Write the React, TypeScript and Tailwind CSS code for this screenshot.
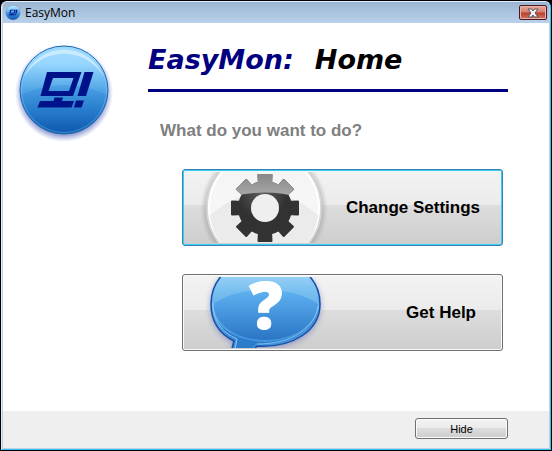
import React from 'react';

function Logo({ id, className }: { id: string; className: string }) {
  return (
    <svg viewBox="0 0 100 100" className={className} aria-hidden="true">
      <defs>
        <linearGradient id={`${id}-disc`} x1="0" y1="0" x2="0" y2="1">
          <stop offset="0" stopColor="#a5dcff" />
          <stop offset="0.2" stopColor="#97d6ff" />
          <stop offset="0.5" stopColor="#52a6e6" />
          <stop offset="0.75" stopColor="#2a7fd0" />
          <stop offset="1" stopColor="#0d56ad" />
        </linearGradient>
        <linearGradient id={`${id}-low`} x1="0" y1="0" x2="0" y2="1">
          <stop offset="0" stopColor="#2f8ada" />
          <stop offset="1" stopColor="#0a52a8" />
        </linearGradient>
        <radialGradient id={`${id}-glow`}>
          <stop offset="0.84" stopColor="#2a3f9a" stopOpacity="0.55" />
          <stop offset="1" stopColor="#5a6ad0" stopOpacity="0" />
        </radialGradient>
        <clipPath id={`${id}-clip`}>
          <circle cx="50" cy="47" r="43" />
        </clipPath>
      </defs>
      <circle cx="50" cy="50" r="49" fill={`url(#${id}-glow)`} />
      <circle cx="50" cy="47" r="44" fill={`url(#${id}-disc)`} stroke="#1d69b8" strokeWidth="1" />
      <g clipPath={`url(#${id}-clip)`}>
        <path d="M4 53 Q50 31 96 53 V96 H4 Z" fill={`url(#${id}-low)`} opacity="0.35" />
        <path d="M10 34 A43 43 0 0 1 90 34 A46 46 0 0 0 10 34 Z" fill="#e2f6ff" opacity="0.6" />
      </g>
      <circle cx="50" cy="47" r="42.5" fill="none" stroke="#8ad0f8" strokeWidth="1" opacity="0.4" />
      <g fill="#00128a">
        <path fillRule="evenodd" d="M33 29 H67.500 L59 53 H26.500 Z M39 35 L34.500 48 H55 L59.500 35 Z" />
        <path d="M70.500 29 H79.500 L72 53 H63.500 Z" />
        <path d="M26 58 H39.500 L40.500 54.500 H49 L48 58 H60 L57.500 64.500 H23.500 Z" />
        <path d="M62 57.500 H70 L67.500 64.500 H60 Z" />
      </g>
    </svg>
  );
}

function GearArt() {
  return (
    <svg viewBox="185 172 155 71" className="h-[71px] w-[155px] shrink-0" aria-hidden="true">
      <defs>
        <radialGradient id="gear-shadow">
          <stop offset="0.88" stopColor="#777" stopOpacity="0.45" />
          <stop offset="1" stopColor="#999" stopOpacity="0" />
        </radialGradient>
        <linearGradient id="gear-disc" x1="0" y1="0" x2="0" y2="1">
          <stop offset="0" stopColor="#f3f3f3" />
          <stop offset="1" stopColor="#fafafa" />
        </linearGradient>
        <linearGradient id="gear-gloss" gradientUnits="userSpaceOnUse" x1="0" y1="172" x2="0" y2="197">
          <stop offset="0" stopColor="#858585" />
          <stop offset="1" stopColor="#aaaaaa" />
        </linearGradient>
        <radialGradient id="gear-dark" gradientUnits="userSpaceOnUse" cx="262" cy="192" r="26">
          <stop offset="0" stopColor="#5e5e5e" />
          <stop offset="1" stopColor="#323232" />
        </radialGradient>
        <clipPath id="gear-shape">
          <circle cx="265" cy="208" r="27" />
          {[0, 45, 90, 135, 180, 225, 270, 315].map((angle) => (
            <path
              key={angle}
              d="M258 186 L257.500 175 Q257.500 174 258.500 174 H271.500 Q272.500 174 272.500 175 L272 186 Z"
              transform={`rotate(${angle} 265 208)`}
            />
          ))}
        </clipPath>
      </defs>
      <circle cx="264" cy="209" r="64" fill="url(#gear-shadow)" />
      <circle cx="264" cy="208" r="57" fill="url(#gear-disc)" stroke="#d6d6d6" strokeWidth="2" />
      <circle cx="264" cy="208" r="55" fill="none" stroke="#ffffff" strokeWidth="2" />
      <path d="M210 215 Q264 170 318 215 Q315 240 300 250 H228 Q212 238 210 215 Z" fill="#e5e5e5" opacity="0.7" />
      <g clipPath="url(#gear-shape)">
        <path d="M225 165 H305 V250 H225 Z" fill="url(#gear-dark)" />
        <path d="M225 165 H305 V199 Q265 186 225 199 Z" fill="url(#gear-gloss)" />
      </g>
      <circle cx="265" cy="208" r="14" fill="#efefef" />
    </svg>
  );
}

function HelpArt() {
  return (
    <svg viewBox="185 277 155 71" className="h-[71px] w-[155px] shrink-0" aria-hidden="true">
      <defs>
        <linearGradient id="help-bubble" gradientUnits="userSpaceOnUse" x1="0" y1="260" x2="0" y2="348">
          <stop offset="0" stopColor="#b5e2fb" />
          <stop offset="0.35" stopColor="#79bff0" />
          <stop offset="1" stopColor="#3c8fda" />
        </linearGradient>
        <linearGradient id="help-low" gradientUnits="userSpaceOnUse" x1="0" y1="290" x2="0" y2="344">
          <stop offset="0" stopColor="#5fb2f1" />
          <stop offset="1" stopColor="#2670c2" />
        </linearGradient>
        <filter id="help-blur" x="-20%" y="-20%" width="140%" height="140%">
          <feGaussianBlur stdDeviation="3" />
        </filter>
        <path
          id="help-outline"
          d="M265 258 C297 258 320 278 320 304 C320 330 294 348 257 346 L248 356 H230 L234 341 C218 333 211 320 211 304 C211 278 233 258 265 258 Z"
        />
      </defs>
      <use href="#help-outline" y="2" fill="#6272bc" opacity="0.7" filter="url(#help-blur)" />
      <use href="#help-outline" fill="url(#help-bubble)" stroke="#174fa8" strokeWidth="1.500" />
      <path
        d="M213 306 C213 328 237 341 265 342 C293 341 316 328 318 306 C319 330 290 345 256 344 L247 353 H233 L237 341 C222 334 213 320 213 306 Z"
        fill="#2c7ccc"
      />
      <path
        d="M213 304 Q233 290 265 290 Q298 290 318 304 C316 325 294 340 265 340 C236 340 215 325 213 304 Z"
        fill="url(#help-low)"
      />
      <path d="M257 344 C292 344 316 328 318 306" fill="none" stroke="#a2d7f8" strokeWidth="1" opacity="0.7" />
      <path d="M213 303 C213 320 221 332 237 339 L235 350" fill="none" stroke="#92cdf5" strokeWidth="1" />
      <text
        x="266"
        y="329"
        textAnchor="middle"
        className="fill-white font-['Open_Sans',sans-serif] text-[66px] font-extrabold"
        stroke="#ffffff"
        strokeWidth="1"
      >
        ?
      </text>
    </svg>
  );
}

export default function App() {
  return (
    <div className="flex min-h-screen flex-col bg-black p-px">
      <div className="flex flex-1 flex-col rounded-t-md border border-t-[#e4eef8] border-r-[#35c3ee] border-b-[#35c3ee] border-l-[#e4eef8] bg-[#b9d1ea] pr-px pb-px pl-px font-['Liberation_Sans',Arial,sans-serif]">
        <header className="flex h-[21px] items-center rounded-t-sm bg-linear-to-b from-[#9bb5d2] to-[#b9d1ea] pr-[2px] pl-[2px]">
          <Logo id="small" className="size-4" />
          <span className="ml-1 flex-1 font-['Open_Sans',sans-serif] text-xs leading-4 text-black">EasyMon</span>
          <button
            type="button"
            aria-label="Close"
            className="flex h-[15px] w-7 items-center justify-center rounded-xs border border-[#4b1822] bg-[linear-gradient(#e9a99b_0%,#d47e6c_48%,#b83e2a_52%,#cf7764_100%)] shadow-[inset_0_0_0_1px_#e8b3a8]"
          >
            <svg viewBox="0 0 12 10" className="h-[10px] w-3" aria-hidden="true">
              <path
                d="M1 1 H4.500 L6 3 L7.500 1 H11 L8 5 L11 9 H7.500 L6 7 L4.500 9 H1 L4 5 Z"
                fill="#f5f5f5"
                stroke="#535666"
                strokeWidth="1"
              />
            </svg>
          </button>
        </header>

        <main className="flex flex-1 items-start bg-white pb-10">
          <Logo id="large" className="mt-5 ml-[11px] size-[100px] shrink-0" />
          <div className="min-w-0 flex-1 pt-5 pr-[41px] pl-[34px]">
            <h1 className="flex gap-[21px] border-b-3 border-[#000080] pb-3 font-['DejaVu_Sans',Verdana,sans-serif] text-[27px] leading-[34px] font-bold whitespace-nowrap italic">
              <span className="text-[#000080]">EasyMon:</span>
              <span className="text-black">Home</span>
            </h1>
            <p className="mt-[29px] ml-3 text-[17px] leading-5 font-bold whitespace-nowrap text-[#808080]">
              What do you want to do?
            </p>
            <div className="mt-7 mr-[5px] ml-[34px] flex flex-col gap-7">
              <button
                type="button"
                className="flex items-center justify-between overflow-hidden rounded-[3px] border border-[#3c7fb1] bg-[linear-gradient(#f3f3f3_0%,#ebebeb_47%,#dddddd_47%,#cdcdcd_100%)] p-[2px] shadow-[inset_0_0_0_1px_#35d0fa]"
              >
                <GearArt />
                <span className="pr-5 text-[17px] leading-5 font-bold whitespace-nowrap text-black">Change Settings</span>
              </button>
              <button
                type="button"
                className="flex items-center justify-between overflow-hidden rounded-[3px] border border-[#707070] bg-[linear-gradient(#f3f3f3_0%,#ebebeb_47%,#dddddd_47%,#cdcdcd_100%)] p-[2px] shadow-[inset_0_0_0_1px_#fafafa]"
              >
                <HelpArt />
                <span className="pr-6 text-[17px] leading-5 font-bold whitespace-nowrap text-black">Get Help</span>
              </button>
            </div>
          </div>
        </main>

        <footer className="flex justify-end bg-[#efefef] pt-[7px] pr-[41px] pb-[9px]">
          <button
            type="button"
            className="h-[21px] w-[93px] rounded-[3px] border border-[#707070] bg-[linear-gradient(#f3f3f3_0%,#ebebeb_48%,#dddddd_48%,#cdcdcd_100%)] text-[11px] leading-4 text-black shadow-[inset_0_0_0_1px_#fafafa]"
          >
            Hide
          </button>
        </footer>
      </div>
    </div>
  );
}
